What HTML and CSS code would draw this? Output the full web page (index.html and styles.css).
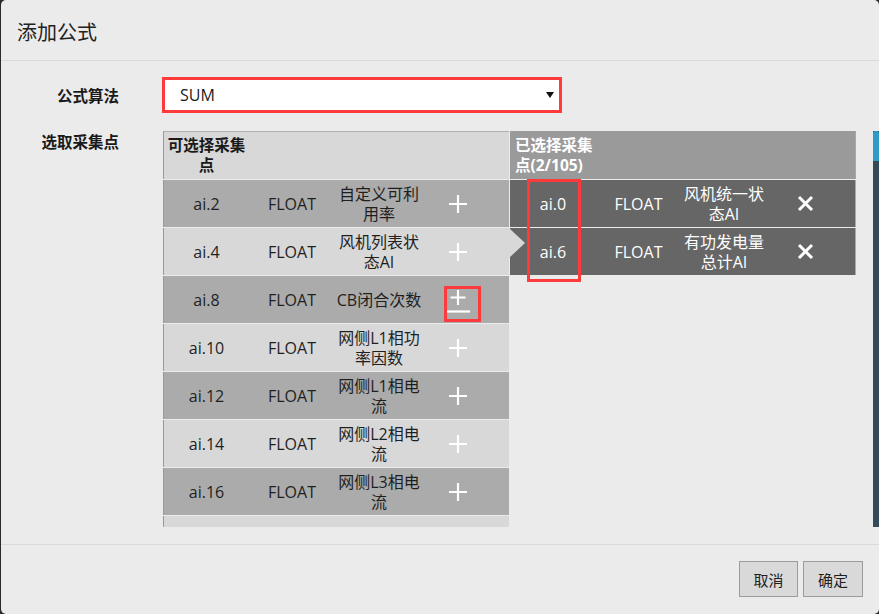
FILE: index.html
```html
<!DOCTYPE html>
<html lang="zh-CN">
<head>
<meta charset="utf-8">
<title>添加公式</title>
<link rel="stylesheet" href="styles.css">
</head>
<body>
<div class="modal">
  <header class="modal-header">
    <h1 class="title">添加公式</h1>
  </header>
  <main class="modal-body">
    <div class="form-row">
      <div class="form-label">公式算法</div>
      <div class="select">
        <span class="select-value">SUM</span>
        <svg class="caret" width="8" height="6" viewBox="0 0 8 6"><polygon points="0,0 8,0 4,6" fill="#111"/></svg>
      </div>
    </div>
    <div class="form-row points-row">
      <div class="form-label">选取采集点</div>
      <div class="panels">
        <div class="panel panel-available">
          <div class="prow phead"><div class="cell head-cell">可选择采集点</div></div>
          <div class="prow dark"><div class="cell">ai.2</div><div class="cell">FLOAT</div><div class="cell desc">自定义可利用率</div><div class="cell"><svg class="plus" width="20" height="20" viewBox="0 0 20 20"><path d="M10 1v18M1 10h18" stroke="#fff" stroke-width="2.2"/></svg></div></div>
          <div class="prow light active"><div class="cell">ai.4</div><div class="cell">FLOAT</div><div class="cell desc">风机列表状态AI</div><div class="cell"><svg class="plus" width="20" height="20" viewBox="0 0 20 20"><path d="M10 1v18M1 10h18" stroke="#fff" stroke-width="2.2"/></svg></div></div>
          <div class="prow dark"><div class="cell">ai.8</div><div class="cell">FLOAT</div><div class="cell desc">CB闭合次数</div><div class="cell"><svg class="plus-focus" width="26" height="26" viewBox="0 0 26 26"><path d="M13 2v15M5.5 9.5h15" stroke="#fff" stroke-width="2.2"/><path d="M1 23.5h24" stroke="#fff" stroke-width="2.2"/></svg></div><div class="mark mark-plus"></div></div>
          <div class="prow light"><div class="cell">ai.10</div><div class="cell">FLOAT</div><div class="cell desc">网侧L1相功率因数</div><div class="cell"><svg class="plus" width="20" height="20" viewBox="0 0 20 20"><path d="M10 1v18M1 10h18" stroke="#fff" stroke-width="2.2"/></svg></div></div>
          <div class="prow dark"><div class="cell">ai.12</div><div class="cell">FLOAT</div><div class="cell desc">网侧L1相电流</div><div class="cell"><svg class="plus" width="20" height="20" viewBox="0 0 20 20"><path d="M10 1v18M1 10h18" stroke="#fff" stroke-width="2.2"/></svg></div></div>
          <div class="prow light"><div class="cell">ai.14</div><div class="cell">FLOAT</div><div class="cell desc">网侧L2相电流</div><div class="cell"><svg class="plus" width="20" height="20" viewBox="0 0 20 20"><path d="M10 1v18M1 10h18" stroke="#fff" stroke-width="2.2"/></svg></div></div>
          <div class="prow dark"><div class="cell">ai.16</div><div class="cell">FLOAT</div><div class="cell desc">网侧L3相电流</div><div class="cell"><svg class="plus" width="20" height="20" viewBox="0 0 20 20"><path d="M10 1v18M1 10h18" stroke="#fff" stroke-width="2.2"/></svg></div></div>
          <div class="prow light"></div>
        </div>
        <div class="panel panel-selected">
          <div class="prow phead"><div class="cell head-cell">已选择采集点(2/105)</div></div>
          <div class="prow sel"><div class="cell">ai.0</div><div class="cell">FLOAT</div><div class="cell desc">风机统一状态AI</div><div class="cell"><svg class="close" width="17" height="17" viewBox="0 0 17 17"><path d="M2 2l13 13M15 2L2 15" stroke="#fff" stroke-width="3"/></svg></div></div>
          <div class="prow sel"><div class="cell">ai.6</div><div class="cell">FLOAT</div><div class="cell desc">有功发电量总计AI</div><div class="cell"><svg class="close" width="17" height="17" viewBox="0 0 17 17"><path d="M2 2l13 13M15 2L2 15" stroke="#fff" stroke-width="3"/></svg></div></div>
          <div class="mark mark-ids"></div>
        </div>
      </div>
      <div class="scrollbar"><div class="thumb"></div></div>
    </div>
  </main>
  <footer class="modal-footer">
    <button class="btn">取消</button>
    <button class="btn">确定</button>
  </footer>
</div>
</body>
</html>
```

FILE: styles.css
```css
* { box-sizing: border-box; }

html, body {
  margin: 0;
  padding: 0;
}

body {
  width: 879px;
  height: 614px;
  overflow: hidden;
  background: #2a2a2a;
  font-family: "Open Sans", "Noto Sans CJK SC", sans-serif;
  font-size: 16px;
  color: #1f1f1f;
}

.modal {
  margin-left: 1px;
  width: 878px;
  height: 614px;
  background: #ebebeb;
  border-radius: 5px;
  display: flex;
  flex-direction: column;
}

.modal-header {
  height: 61px;
  border-bottom: 1px solid #dadada;
  display: flex;
  align-items: center;
  padding: 2px 0 0 16px;
}

.title {
  margin: 0;
  font-size: 20px;
  font-weight: normal;
  color: #222;
  font-family: "Noto Sans CJK SC", sans-serif;
}

.modal-body {
  height: 484px;
  border-bottom: 1px solid #dadada;
  padding-top: 16px;
  display: flex;
  flex-direction: column;
  gap: 18px;
}

.form-row {
  display: flex;
  align-items: center;
}

.form-label {
  width: 118px;
  flex: none;
  text-align: right;
  font-weight: bold;
  line-height: 20px;
  font-family: "Noto Sans CJK SC", sans-serif;
  font-size: 15.5px;
  color: #1a1a1a;
}

.select {
  margin-left: 43px;
  width: 400px;
  height: 36px;
  border: 3px solid #ff3a3a;
  background: #fff;
  display: flex;
  align-items: center;
  justify-content: space-between;
  padding: 0 5px 0 15px;
}

.select-value {
  color: #1a1a1a;
}

.points-row {
  align-items: flex-start;
}

.panels {
  margin-left: 44px;
  display: flex;
  gap: 1px;
  align-items: flex-start;
}

.panel {
  width: 346px;
  display: flex;
  flex-direction: column;
  gap: 1px;
  position: relative;
}

.panel-available {
  height: 396px;
  overflow-y: clip;
  overflow-x: visible;
}

.prow {
  display: grid;
  height: 47px;
  flex: none;
  position: relative;
  line-height: 20px;
}

.panel-available .prow {
  grid-template-columns: 85px 86px 88px 70px;
  border-left: 1px solid #999;
}

.panel-selected .prow {
  grid-template-columns: 86px 85px 86px 74px;
  border-right: 1px solid #a9a9a9;
}

.prow.phead {
  height: 48px;
  display: block;
  padding: 4px 0;
  font-weight: bold;
  font-size: 15.5px;
}

.panel-available .phead {
  background: #d8d8d8;
  border-top: 1px solid #b0b0b0;
  padding-top: 3px;
}

.panel-available .phead .head-cell {
  width: 85px;
  text-align: center;
  color: #1a1a1a;
}

.panel-selected .phead {
  background: #9a9a9a;
  color: #fff;
}

.panel-selected .phead .head-cell {
  width: 88px;
  padding-left: 5px;
  text-align: left;
}

.cell {
  display: flex;
  align-items: center;
  justify-content: center;
  text-align: center;
}

.head-cell {
  display: block;
}

.desc {
  padding: 0 1px;
}

.prow.dark { background: #ababab; }
.prow.light { background: #d8d8d8; }
.prow.sel { background: #666; color: #fff; }

.prow.active::after {
  content: "";
  position: absolute;
  right: -16px;
  top: 0;
  width: 0;
  height: 0;
  border-left: 16px solid #d8d8d8;
  border-top: 15px solid transparent;
  border-bottom: 15px solid transparent;
  z-index: 2;
}

.plus { display: block; }
.plus-focus { display: block; margin-top: 2px; }
.close { display: block; margin-left: 2px; }

.mark {
  position: absolute;
  border: 3px solid #ff3a3a;
  pointer-events: none;
}

.mark-plus {
  left: 280px;
  top: 10px;
  width: 37px;
  height: 36px;
}

.mark-ids {
  left: 17px;
  top: 48px;
  width: 54px;
  height: 103px;
}

.scrollbar {
  margin-left: auto;
  width: 6px;
  height: 396px;
  background: #354a59;
}

.thumb {
  height: 30px;
  background: #2d9bc3;
  border-radius: 2px 2px 0 0;
}

.modal-footer {
  flex: 1;
  display: flex;
  justify-content: flex-end;
  align-items: flex-start;
  gap: 5px;
  padding: 16px 16px 0 0;
}

.btn {
  height: 36px;
  width: 59px;
  padding: 0;
  background: #d9d9d9;
  border: 1px solid #9c9c9c;
  font-family: "Noto Sans CJK SC", sans-serif;
  font-size: 15px;
  color: #1f1f1f;
  border-radius: 0;
}

.btn + .btn {
  width: 60px;
}
```
